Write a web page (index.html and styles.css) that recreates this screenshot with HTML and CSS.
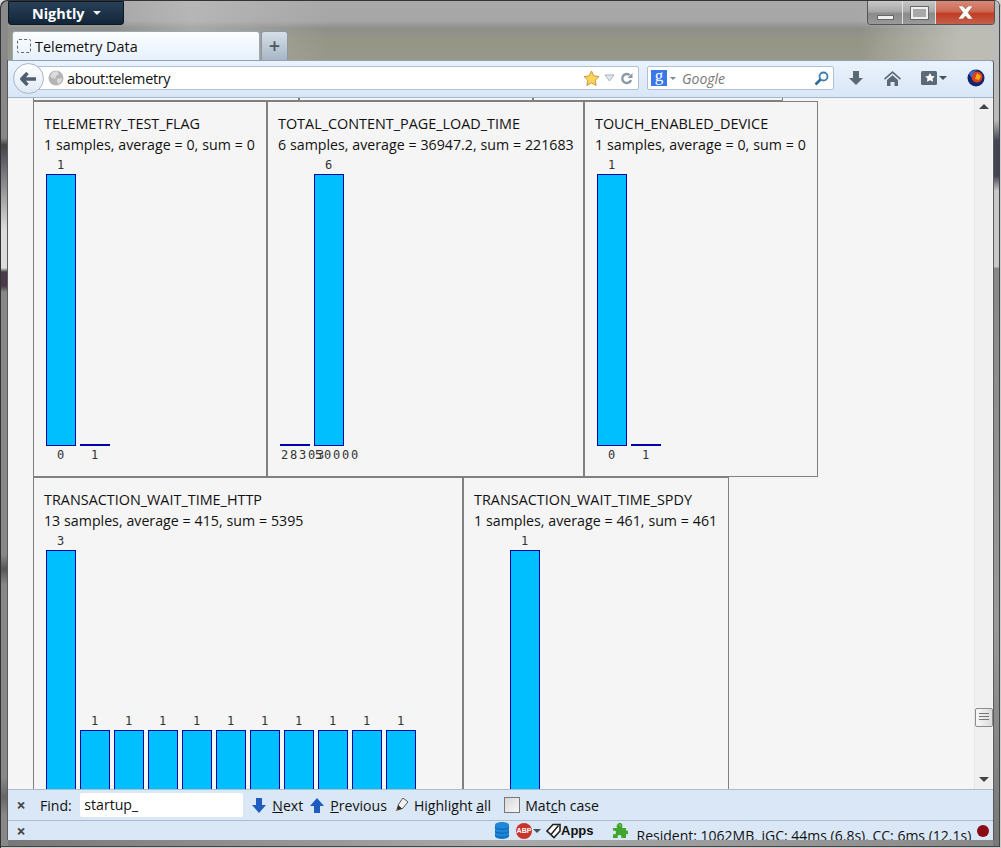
FILE: index.html
```html
<!DOCTYPE html>
<html lang="en">

<head>
    <meta charset="UTF-8">
    <title>Telemetry Data</title>
    <link rel="stylesheet" href="styles.css">
</head>

<body>
    <div class="titlebar">
        <div class="app-btn">Nightly <i class="caret caret-white"></i></div>
        <div class="caption">
            <div class="cap-btn"><i class="cap-min"></i></div>
            <div class="cap-btn cap-mid"><i class="cap-max"></i></div>
            <div class="cap-btn cap-close">
                <svg width="17" height="13" viewBox="0 0 17 13"><path d="M1 0h5l2.500 3L11 0h5l-5 6.500 5 6.500h-5l-2.500-3L6 13H1l5-6.500z" fill="#fff" stroke="#8a4a3c" stroke-width=".5"/></svg>
            </div>
        </div>
    </div>

    <div class="tabstrip">
        <div class="tab"><i class="favicon"></i>Telemetry Data</div>
        <div class="newtab">+</div>
    </div>

    <div class="toolbar">
        <div class="back">
            <svg width="17" height="14" viewBox="0 0 17 14"><path d="M7.500 1 1.800 7l5.700 6M2.500 7H16" fill="none" stroke="#4f5f70" stroke-width="3.400" stroke-linejoin="round"/></svg>
        </div>
        <div class="urlbar">
            <svg class="globe" width="16" height="16" viewBox="0 0 16 16"><circle cx="8" cy="8" r="7.500" fill="#b4b4b4"/><path d="M5 2 9 1l2 3-3 2-1 3-3-1-2-2zM9 9l5-1-1 4-3 2-1-3z" fill="#dcdcdc"/></svg>
            <span class="url-text">about:telemetry</span>
            <svg class="star" width="17" height="17" viewBox="0 0 17 17"><path d="M8.500 1l2.300 4.900 5.200.7-3.800 3.600 1 5.300-4.700-2.600-4.700 2.600 1-5.300L1 6.600l5.200-.7z" fill="#fcd45c" stroke="#c79a35"/></svg>
            <svg class="drop" width="11" height="8" viewBox="0 0 11 8"><path d="M1 1h9L5.500 7z" fill="#e4e8ec" stroke="#a9b1ba"/></svg>
            <svg class="reload" width="13" height="13" viewBox="0 0 13 13"><path d="M11 8a4.500 4.500 0 1 1-1.200-4.800" fill="none" stroke="#8b99a6" stroke-width="2.400"/><path d="M12.500 1v5h-5z" fill="#8b99a6"/></svg>
        </div>
        <div class="searchbar">
            <span class="engine">g</span>
            <i class="caret caret-grey"></i>
            <span class="search-text">Google</span>
            <svg class="glass" width="15" height="15" viewBox="0 0 15 15"><circle cx="9.500" cy="5.500" r="4" fill="none" stroke="#3d7fb5" stroke-width="1.800"/><path d="M6.500 8.500 1.500 13.500" stroke="#2f6a9c" stroke-width="2.600"/></svg>
        </div>
        <div class="tools">
            <svg width="16" height="16" viewBox="0 0 16 16"><path d="M5 1h6v7h4l-7 7-7-7h4z" fill="#5b6977"/></svg>
            <svg width="17" height="15" viewBox="0 0 17 15"><path d="M8.500 0 17 7.500l-1 1.200-7.500-6.400L1 8.700 0 7.500zM3 9l5.500-4.800L14 9v6h-3.500v-4h-4v4H3z" fill="#5b6977"/></svg>
            <div class="bookmarks">
                <svg width="16" height="14" viewBox="0 0 16 14"><rect width="16" height="14" rx="1.500" fill="#5b6977"/><path d="M9 2l1.600 3 3.200.4-2.300 2.200.6 3.200L9 9.300l-3.100 1.500.6-3.200-2.300-2.200L7.400 5z" fill="#fff"/></svg>
                <i class="caret caret-dark"></i>
            </div>
            <svg width="18" height="18" viewBox="0 0 18 18"><circle cx="9" cy="9" r="8.500" fill="#14246a"/><circle cx="10" cy="8" r="5.500" fill="#d9401c"/><path d="M10 4l4 3-2 4-4-1z" fill="#f6a81c"/><path d="M2 5c2-3 5-4 8-4-3 2-5 4-5 8z" fill="#3e6fc4"/></svg>
        </div>
    </div>

    <div class="viewport">
        <div class="page">
            <div class="row">
                <div class="card card-cut" style="width:266px"></div>
                <div class="card card-cut" style="width:234px"></div>
                <div class="card card-cut" style="width:250px"></div>
            </div>
            <div class="row">
                <div class="card" style="width:234px">
                    <div class="name">TELEMETRY_TEST_FLAG</div>
                    <div class="stats">1 samples, average = 0, sum = 0</div>
                    <div class="chart">
                        <div class="col"><div class="val">1</div><div class="bar" style="height:272px"></div><div class="lbl">0</div></div>
                        <div class="col"><div class="bar" style="height:2px"></div><div class="lbl">1</div></div>
                    </div>
                </div>
                <div class="card" style="width:317px">
                    <div class="name">TOTAL_CONTENT_PAGE_LOAD_TIME</div>
                    <div class="stats">6 samples, average = 36947.2, sum = 221683</div>
                    <div class="chart">
                        <div class="col"><div class="bar" style="height:2px"></div><div class="lbl">28303</div></div>
                        <div class="col"><div class="val">6</div><div class="bar" style="height:272px"></div><div class="lbl">50000</div></div>
                    </div>
                </div>
                <div class="card" style="width:234px">
                    <div class="name">TOUCH_ENABLED_DEVICE</div>
                    <div class="stats">1 samples, average = 0, sum = 0</div>
                    <div class="chart">
                        <div class="col"><div class="val">1</div><div class="bar" style="height:272px"></div><div class="lbl">0</div></div>
                        <div class="col"><div class="bar" style="height:2px"></div><div class="lbl">1</div></div>
                    </div>
                </div>
            </div>
            <div class="row">
                <div class="card" style="width:430px">
                    <div class="name">TRANSACTION_WAIT_TIME_HTTP</div>
                    <div class="stats">13 samples, average = 415, sum = 5395</div>
                    <div class="chart">
                        <div class="col"><div class="val">3</div><div class="bar" style="height:272px"></div></div>
                        <div class="col"><div class="val">1</div><div class="bar" style="height:92px"></div></div>
                        <div class="col"><div class="val">1</div><div class="bar" style="height:92px"></div></div>
                        <div class="col"><div class="val">1</div><div class="bar" style="height:92px"></div></div>
                        <div class="col"><div class="val">1</div><div class="bar" style="height:92px"></div></div>
                        <div class="col"><div class="val">1</div><div class="bar" style="height:92px"></div></div>
                        <div class="col"><div class="val">1</div><div class="bar" style="height:92px"></div></div>
                        <div class="col"><div class="val">1</div><div class="bar" style="height:92px"></div></div>
                        <div class="col"><div class="val">1</div><div class="bar" style="height:92px"></div></div>
                        <div class="col"><div class="val">1</div><div class="bar" style="height:92px"></div></div>
                        <div class="col"><div class="val">1</div><div class="bar" style="height:92px"></div></div>
                    </div>
                </div>
                <div class="card" style="width:266px">
                    <div class="name">TRANSACTION_WAIT_TIME_SPDY</div>
                    <div class="stats">1 samples, average = 461, sum = 461</div>
                    <div class="chart">
                        <div class="col"></div>
                        <div class="col"><div class="val">1</div><div class="bar" style="height:272px"></div></div>
                    </div>
                </div>
            </div>
        </div>
        <div class="scrollbar">
            <i class="arrow-up"></i>
            <div class="thumb"><i></i><i></i><i></i></div>
            <i class="arrow-down"></i>
        </div>
    </div>

    <div class="findbar">
        <span class="close">&#215;</span>
        <span class="find-label">Find:</span>
        <div class="find-input">startup_</div>
        <div class="find-btn">
            <svg width="14" height="15" viewBox="0 0 14 15"><path d="M4 0h6v7h4l-7 8-7-8h4z" fill="#1f5cc0"/></svg>
            <span><u>N</u>ext</span>
        </div>
        <div class="find-btn">
            <svg width="14" height="15" viewBox="0 0 14 15"><path d="M4 15h6V8h4L7 0 0 8h4z" fill="#1f5cc0"/></svg>
            <span><u>P</u>revious</span>
        </div>
        <div class="find-btn">
            <svg width="14" height="14" viewBox="0 0 14 14"><path d="M9 0l5 4-6 7-4-4z" fill="#f4f4f4" stroke="#555"/><path d="M4 7l4 4-3 1-3 1z" fill="#333"/><path d="M1 13l2-2 1 1z" fill="#e8a020"/></svg>
            <span>Highlight <u>a</u>ll</span>
        </div>
        <label class="match"><i class="check"></i><span>Mat<u>c</u>h case</span></label>
    </div>

    <div class="statusbar">
        <span class="close close-status">&#215;</span>
        <svg class="db" width="14" height="17" viewBox="0 0 14 17"><path d="M0 3c0-4 14-4 14 0v11c0 4-14 4-14 0z" fill="#1f86d8"/><path d="M0 5c0 3 14 3 14 0M0 9c0 3 14 3 14 0M0 13c0 3 14 3 14 0" fill="none" stroke="#0d5fa8"/></svg>
        <div class="abp">ABP</div>
        <i class="caret caret-dark caret-abp"></i>
        <svg class="apps-icon" width="15" height="16" viewBox="0 0 15 16"><path d="M1 8 7 1.500h7V8L8 14.500z" fill="#fff" stroke="#222" stroke-width="1.600"/><path d="M5 11.500 12.500 2.500" stroke="#222" stroke-width="1.500"/></svg>
        <b class="apps">Apps</b>
        <svg class="puzzle" width="16" height="15" viewBox="0 0 16 15"><path d="M1 5h4C4 2 6 0 8 0s3 2 2 5h4v3c2-1 2 0 2 1.500S16 12 14 11v4H9c1-2 0-3-1.500-3S5 13 6 15H1v-4c2 1 3 0 3-1.500S3 7 1 8z" fill="#3fa52c"/><path d="M7 2c1-1 2 0 2 1z" fill="#9be080"/></svg>
        <span class="memory">Resident: 1062MB, iGC: 44ms (6.8s), CC: 6ms (12.1s)</span>
        <i class="rec"></i>
    </div>
</body>

</html>
```

FILE: styles.css
```css
* {
    padding: 0;
    margin: 0;
    box-sizing: border-box;
}

html {
    height: 100%;
    background: #d8d8d8;
}

body {
    height: 848px;
    width: 1001px;
    overflow: hidden;
    padding: 0 8px 8px;
    display: flex;
    flex-direction: column;
    font: 14.4px "Open Sans", "Noto Sans", sans-serif;
    color: #111;
    border-radius: 7px 7px 0 0;
    box-shadow: inset 1px 1px #333, inset -1px -1px #ccc, inset -2px -2px #444;
    background:
        linear-gradient(#8a8a8a 0, #888 138px, #444 145px, #50505a 153px, #7a7a80 175px, #bbb 211px, #dcdcdc 230px, #dcdcdc 268px, #483a48 272px, #483a48 286px, #888 292px, #888 555px, #555 569px, #888 585px, #888 777px, #666 797px, #888 815px) left top / 8px 100% no-repeat,
        linear-gradient(#bbb 60px, #bbb 120px, #445 141px, #445 176px, #c8c8c8 191px, #c8c8c8 267px, #888 268px, #999 627px, #777 848px) right top / 8px 100% no-repeat,
        linear-gradient(90deg, #777, #aaa 500px, #888) left bottom / 100% 8px no-repeat,
        linear-gradient(90deg, rgba(180, 180, 180, 0) 110px, rgba(200, 200, 200, .45) 190px, rgba(200, 200, 200, 0) 330px, rgba(190, 190, 185, 0) 860px, rgba(195, 195, 188, .85) 960px),
        linear-gradient(#a9a9a9 0, #a6a6a6 21px, #8e8e8c 28px, #959586 38px, #98988a 60px);
}

i {
    display: block;
}

/* title bar */
.titlebar {
    height: 30px;
    flex: none;
    display: flex;
    justify-content: space-between;
    align-items: flex-start;
}

.app-btn {
    width: 116px;
    height: 24px;
    margin-top: 1px;
    padding-left: 23px;
    display: flex;
    align-items: center;
    gap: 8px;
    color: #fff;
    font-weight: 700;
    font-size: 14.4px;
    background: linear-gradient(#2a4058, #12263a);
    border: 1px solid #0a1824;
    border-radius: 0 0 3px 3px;
}

.caret {
    width: 0;
    height: 0;
    border: 4px solid transparent;
    border-bottom-width: 0;
    border-top-width: 4px;
}

.caret-white {
    border-top-color: #eee;
}

.caret-grey {
    border-top-color: #7c8894;
}

.caret-dark {
    border-top-color: #44505c;
}

.caption {
    width: 128px;
    height: 24px;
    margin: 1px -2px 0 0;
    display: flex;
    border: 1px solid #555;
    border-top: 0;
    border-radius: 0 0 4px 4px;
    overflow: hidden;
}

.cap-btn {
    width: 35px;
    display: flex;
    align-items: center;
    justify-content: center;
    background: linear-gradient(#c8c8c8, #a8a8a8 45%, #8a8a8a 55%, #9a9a9a);
    border-right: 1px solid #e0e0e0;
}

.cap-mid {
    width: 33px;
}

.cap-close {
    flex: 1;
    border-right: 0;
    background: linear-gradient(#d88a78, #cc6a54 45%, #c03c22 55%, #c4604c);
}

.cap-min {
    width: 17px;
    height: 5px;
    margin-top: 10px;
    background: #eee;
    border: 1px solid #666;
}

.cap-max {
    width: 17px;
    height: 12px;
    background: #a8a8a8;
    border: 2px solid #eee;
    outline: 1px solid #666;
}

/* tabs */
.tabstrip {
    height: 30px;
    flex: none;
    padding: 1px 0 0 4px;
    display: flex;
    gap: 1px;
}

.tab {
    width: 248px;
    padding-left: 4px;
    display: flex;
    align-items: center;
    gap: 4px;
    background: linear-gradient(#fbfdff, #e6f0fb);
    border: 1px solid #9aa8b4;
    border-bottom: 0;
    border-radius: 3px 3px 0 0;
}

.favicon {
    width: 14px;
    height: 14px;
    border: 1px dashed #666;
    border-radius: 2px;
}

.newtab {
    width: 27px;
    text-align: center;
    font-size: 20px;
    line-height: 28px;
    font-weight: 600;
    color: #4a5866;
    background: linear-gradient(#d6dfe8, #a8b6c4);
    border: 1px solid #8b98a4;
    border-bottom: 0;
    border-radius: 3px 3px 0 0;
}

/* nav toolbar */
.toolbar {
    height: 38px;
    flex: none;
    padding-left: 22px;
    display: flex;
    align-items: center;
    background: linear-gradient(#eaf3fd, #d8e6f6);
    border-top: 1px solid #8fa2b4;
    border-bottom: 1px solid #a4b7ca;
    position: relative;
    border-radius: 0 3px 0 0;
    box-shadow: -1px 0 #5a5a5a, 1px 0 #5a5a5a;
}

.back {
    position: absolute;
    left: 5px;
    top: 2px;
    width: 31px;
    height: 31px;
    display: flex;
    align-items: center;
    justify-content: center;
    background: linear-gradient(#fff, #dfe9f4);
    border: 1px solid #a6b6c6;
    border-radius: 50%;
}

.urlbar,
.searchbar {
    height: 24px;
    margin-top: -2px;
    display: flex;
    align-items: center;
    background: #fff;
    border: 1px solid #aec0d2;
    border-radius: 2px;
}

.urlbar {
    width: 609px;
    padding-left: 17px;
}

.url-text {
    margin-left: 3px;
    padding-top: 1px;
    flex: 1;
    letter-spacing: -.3px;
}

.star {
    margin-right: 4px;
}

.drop {
    margin-right: 5px;
}

.reload {
    margin-right: 5px;
}

.searchbar {
    width: 187px;
    margin-left: 8px;
    padding-left: 3px;
}

.engine {
    width: 16px;
    height: 16px;
    background: #3a78e8;
    color: #fff;
    font: 17px/12px "Liberation Serif", serif;
    text-align: center;
}

.searchbar .caret {
    margin-left: 3px;
    border-width: 3px 3px 0;
}

.search-text {
    flex: 1;
    margin-left: 6px;
    padding-top: 1px;
    color: #777;
    font-style: italic;
    font-size: 14px;
}

.glass {
    margin-right: 4px;
}

.tools {
    flex: 1;
    display: flex;
    align-items: center;
    margin-top: -2px;
    padding-left: 14px;
    gap: 20px;
}

.bookmarks {
    display: flex;
    align-items: center;
    gap: 2px;
}

/* page */
.viewport {
    height: 691px;
    flex: none;
    display: flex;
    overflow: hidden;
    background: #f5f5f5;
    box-shadow: -1px 0 #5a5a5a, 1px 0 #5a5a5a;
}

.page {
    flex: 1;
    padding-left: 25px;
    overflow: hidden;
}

.row {
    display: flex;
}

.card {
    flex: none;
    padding: 11px 10px 10px;
    border: 1px solid #808080;
    white-space: nowrap;
}

.card-cut {
    height: 3px;
    padding: 0;
    border-top: 0;
}

.name,
.stats {
    line-height: 21px;
}

.stats {
    font-size: 14.2px;
    word-spacing: .2px;
}

.chart {
    margin-top: 3px;
    display: flex;
    align-items: flex-end;
}

.col {
    width: 30px;
    margin: 0 2px;
    flex: none;
}

.val,
.lbl {
    font: 12px "DejaVu Sans Mono", monospace;
    letter-spacing: 1.8px;
    padding-left: 1px;
    text-align: center;
    white-space: nowrap;
    color: #333;
}

.val {
    height: 16px;
    line-height: 15px;
}

.lbl {
    height: 20px;
    line-height: 18px;
}

.bar {
    background: #00bfff;
    border: 1px solid #0000aa;
}

/* scrollbar */
.scrollbar {
    width: 18px;
    margin-right: 1px;
    flex: none;
    display: flex;
    flex-direction: column;
    align-items: center;
    background: #f0f0f0;
    border-left: 1px solid #e6e6e6;
}

.arrow-up,
.arrow-down {
    width: 0;
    height: 0;
    border: 5px solid transparent;
}

.arrow-up {
    margin-top: 6px;
    border-top: 0;
    border-bottom-color: #444;
}

.arrow-down {
    margin-bottom: 7px;
    border-bottom: 0;
    border-top-color: #444;
}

.thumb {
    width: 18px;
    height: 19px;
    margin-top: auto;
    margin-bottom: 50px;
    padding-top: 4px;
    background: linear-gradient(90deg, #f8f8f8, #dcdcdc);
    border: 1px solid #8c8c8c;
    border-radius: 2px;
}

.thumb i {
    width: 10px;
    height: 1px;
    margin: 0 auto 2px;
    background: #777;
}

/* find bar */
.findbar {
    height: 32px;
    flex: none;
    display: flex;
    align-items: center;
    font-size: 14.1px;
    background: #d9e7f6;
    border-top: 1px solid #a9bcd0;
    border-bottom: 1px solid #a9bcd0;
    box-shadow: -1px 0 #5a5a5a, 1px 0 #5a5a5a;
}

.close {
    width: 26px;
    text-align: center;
    color: #444;
    font-size: 16px;
    font-weight: 700;
}

.find-label {
    margin-left: 6px;
}

.find-input {
    width: 163px;
    height: 24px;
    margin: 0 9px 0 8.500px;
    padding-left: 4px;
    line-height: 24px;
    background: #fff;
    border-radius: 2px;
}

.find-btn {
    display: flex;
    align-items: center;
    gap: 6px;
    margin-right: 7px;
}

.match {
    display: flex;
    align-items: center;
    gap: 5px;
    margin-left: 6px;
    color: #111;
}

.check {
    width: 16px;
    height: 16px;
    background: linear-gradient(135deg, #d8d8d8, #f8f8f8);
    border: 1px solid #777;
}

/* status bar */
.statusbar {
    height: 19px;
    flex: none;
    display: flex;
    align-items: center;
    overflow: hidden;
    background: #d9e7f6;
    position: relative;
    font-size: 14px;
    box-shadow: -1px 0 #5a5a5a, 1px 0 #5a5a5a;
}

.close-status {
    margin-right: 461px;
}

.db {
    flex: none;
}

.abp {
    width: 16px;
    height: 16px;
    margin-left: 7px;
    border-radius: 50%;
    background: #c8342c;
    color: #fff;
    font: 700 7px/16px "Liberation Sans", sans-serif;
    text-align: center;
}

.caret-abp {
    margin-left: 1px;
}

.apps-icon {
    margin-left: 5px;
}

.apps {
    font: 700 13px "Liberation Sans", sans-serif;
}

.puzzle {
    margin-left: 18px;
}

.memory {
    margin: 10px 0 0 9px;
    white-space: nowrap;
    line-height: 19px;
}

.rec {
    width: 12px;
    height: 12px;
    margin-left: 6px;
    border-radius: 50%;
    background: #8c0a14;
}
```
